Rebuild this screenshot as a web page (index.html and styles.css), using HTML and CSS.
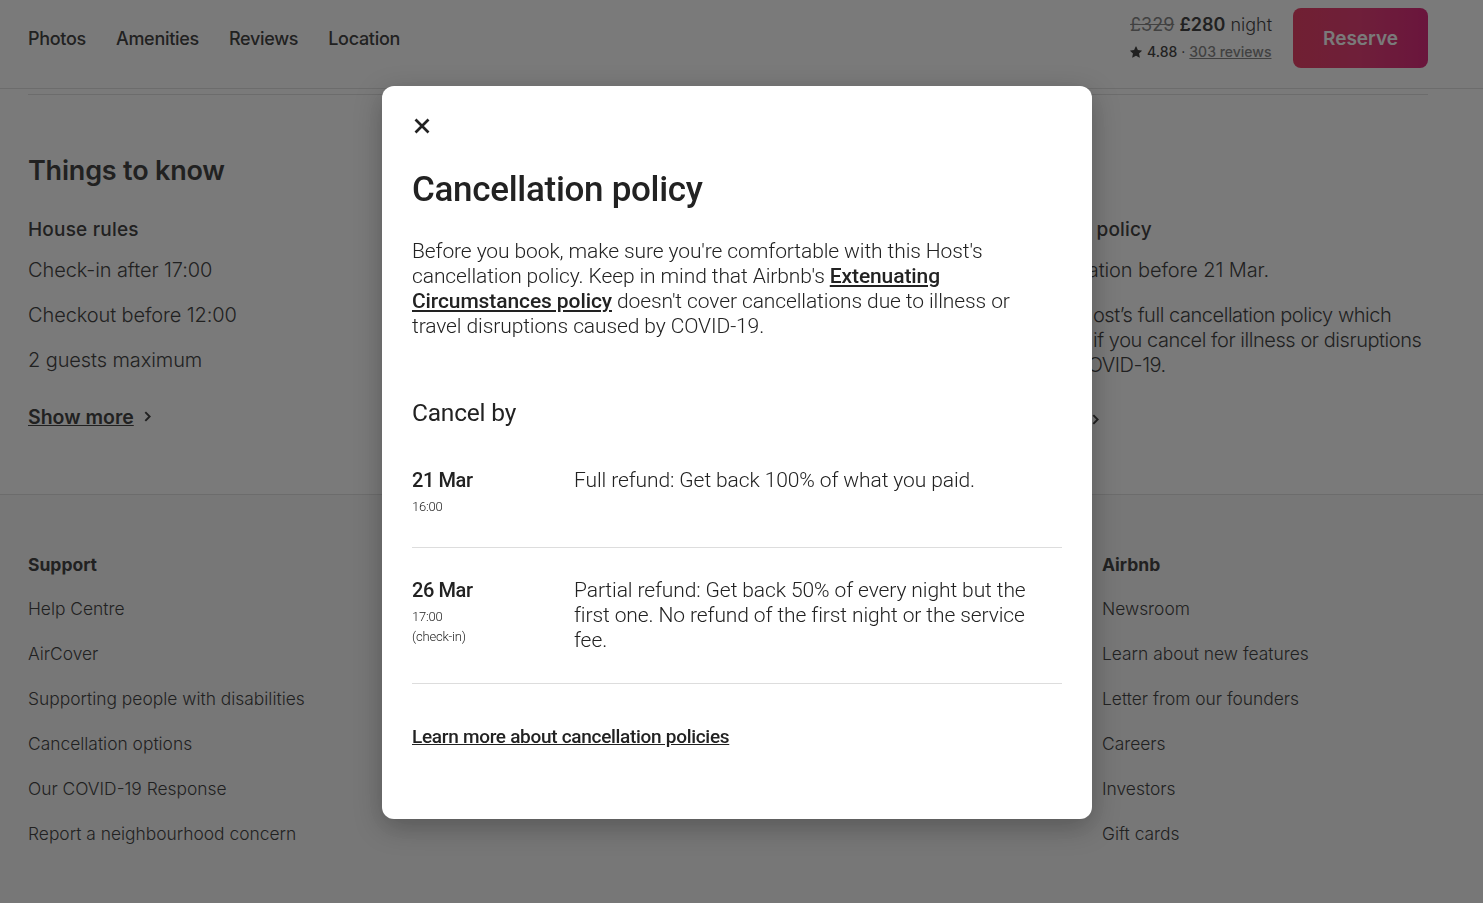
FILE: index.html
```html
<!DOCTYPE html>
<html lang="en">
<head>
<meta charset="utf-8">
<title>Cancellation policy</title>
<link rel="stylesheet" href="styles.css">
</head>
<body>
<div class="page">
  <header class="topbar">
    <nav class="tabs">
      <a class="tab">Photos</a>
      <a class="tab">Amenities</a>
      <a class="tab">Reviews</a>
      <a class="tab">Location</a>
    </nav>
    <div class="booking">
      <div class="price">
        <div class="price-line"><span class="old">£329</span> <span class="now">£280</span> <span class="unit">night</span></div>
        <div class="rating">
          <svg class="star" viewBox="0 0 32 32" width="12" height="12"><path d="M15.1 1.58l-4.13 8.88-9.86 1.27a1 1 0 0 0-.54 1.74l7.3 6.57-1.97 9.85a1 1 0 0 0 1.48 1.06L16 26.05l8.62 4.9a1 1 0 0 0 1.48-1.06l-1.97-9.85 7.3-6.57a1 1 0 0 0-.55-1.73l-9.86-1.28-4.12-8.88a1 1 0 0 0-1.8 0z" fill="currentColor"/></svg>
          <span class="score">4.88</span> · <a class="reviews">303 reviews</a>
        </div>
      </div>
      <button class="reserve">Reserve</button>
    </div>
  </header>

  <main class="container">
    <section class="know">
      <h2 class="know-title">Things to know</h2>
      <div class="know-grid">
        <div class="know-col">
          <h3 class="col-title">House rules</h3>
          <ul class="know-list">
            <li>Check-in after 17:00</li>
            <li>Checkout before 12:00</li>
            <li>2 guests maximum</li>
          </ul>
          <div class="more"><a class="show-more">Show more</a><svg class="chev" viewBox="0 0 12 20" width="7" height="11"><path d="M2 2l8 8-8 8" fill="none" stroke="currentColor" stroke-width="3.6"/></svg></div>
        </div>
        <div class="know-col" aria-hidden="true"></div>
        <div class="know-col">
          <h3 class="col-title">Cancellation policy</h3>
          <ul class="know-list">
            <li>Free cancellation before 21 Mar.</li>
            <li class="para">Review the Host’s full cancellation policy which applies even if you cancel for illness or disruptions caused by COVID-19.</li>
          </ul>
          <div class="more more-low"><a class="show-more">Show more</a><svg class="chev" viewBox="0 0 12 20" width="7" height="11"><path d="M2 2l8 8-8 8" fill="none" stroke="currentColor" stroke-width="3.6"/></svg></div>
        </div>
      </div>
    </section>
  </main>

  <footer class="footer">
    <div class="footer-grid">
      <div class="f-col">
        <h4 class="f-title">Support</h4>
        <ul class="f-list">
          <li>Help Centre</li>
          <li>AirCover</li>
          <li>Supporting people with disabilities</li>
          <li>Cancellation options</li>
          <li>Our COVID-19 Response</li>
          <li>Report a neighbourhood concern</li>
        </ul>
      </div>
      <div class="f-col" aria-hidden="true"></div>
      <div class="f-col" aria-hidden="true"></div>
      <div class="f-col">
        <h4 class="f-title">Airbnb</h4>
        <ul class="f-list">
          <li>Newsroom</li>
          <li>Learn about new features</li>
          <li>Letter from our founders</li>
          <li>Careers</li>
          <li>Investors</li>
          <li>Gift cards</li>
        </ul>
      </div>
    </div>
  </footer>
</div>

<div class="overlay">
  <div class="modal" role="dialog" aria-label="Cancellation policy">
    <button class="close" aria-label="Close">
      <svg viewBox="0 0 32 32" width="16" height="16"><path d="M3 3l26 26M29 3L3 29" fill="none" stroke="currentColor" stroke-width="5.4"/></svg>
    </button>
    <h1 class="m-title">Cancellation policy</h1>
    <p class="m-text">Before you book, make sure you're comfortable with this Host's cancellation policy. Keep in mind that Airbnb's <a class="m-link">Extenuating Circumstances policy</a> doesn't cover cancellations due to illness or travel disruptions caused by COVID-19.</p>
    <h2 class="m-sub">Cancel by</h2>
    <div class="rows">
      <div class="row">
        <div class="when">
          <div class="date">21 Mar</div>
          <div class="time">16:00</div>
        </div>
        <div class="what">Full refund: Get back 100% of what you paid.</div>
      </div>
      <div class="row">
        <div class="when">
          <div class="date">26 Mar</div>
          <div class="time">17:00<br>(check-in)</div>
        </div>
        <div class="what">Partial refund: Get back 50% of every night but the first one. No refund of the first night or the service fee.</div>
      </div>
    </div>
    <a class="m-learn">Learn more about cancellation policies</a>
  </div>
</div>
</body>
</html>
```

FILE: styles.css
```css
* { box-sizing: border-box; }

html, body {
  margin: 0;
  padding: 0;
}

body {
  width: 1483px;
  height: 903px;
  overflow: hidden;
  background: #fff;
  color: #222;
  font-family: Inter, "Noto Sans", "Liberation Sans", sans-serif;
}

ul { list-style: none; margin: 0; padding: 0; }
h1, h2, h3, h4, p { margin: 0; }

.page {
  width: 1483px;
}

/* ---------- top bar ---------- */
.topbar {
  height: 89px;
  border-bottom: 1px solid #ddd;
  display: flex;
  align-items: flex-start;
  justify-content: space-between;
  padding: 0 55px 0 28px;
}

.tabs {
  display: flex;
  gap: 30px;
  height: 77px;
  align-items: center;
}

.tab {
  font-size: 18px;
  font-weight: 500;
  color: #222;
  letter-spacing: -0.3px;
}

.booking {
  display: flex;
  align-items: flex-start;
  gap: 21px;
  padding-top: 8px;
}

.price {
  padding-top: 5px;
}

.price-line {
  font-size: 18px;
  line-height: 24px;
  white-space: nowrap;
}

.old {
  color: #717171;
  text-decoration: line-through;
  font-weight: 400;
}

.now {
  font-weight: 600;
}

.unit {
  font-weight: 300;
}

.rating {
  font-size: 14px;
  line-height: 18px;
  margin-top: 6px;
  display: flex;
  align-items: center;
  gap: 4px;
  white-space: nowrap;
}

.star { color: #222; margin-right: 1px; }

.score { font-weight: 500; }

.reviews {
  color: #717171;
  text-decoration: underline;
  font-weight: 500;
}

.reserve {
  width: 135px;
  height: 60px;
  border: 0;
  border-radius: 8px;
  background: linear-gradient(to right, #e61e4d 0%, #e31c5f 50%, #d70466 100%);
  color: #fff;
  font-family: inherit;
  font-size: 19px;
  font-weight: 600;
}

/* ---------- things to know ---------- */
.container {
  width: 1400px;
  margin-left: 28px;
  border-top: 1px solid #ddd;
  margin-top: 5px;
}

.know {
  padding: 61px 0 62px;
}

.know-title {
  font-size: 27px;
  line-height: 30px;
  font-weight: 600;
  letter-spacing: -0.2px;
}

.know-grid {
  display: grid;
  grid-template-columns: repeat(3, 1fr);
  gap: 22px;
  margin-top: 32px;
}

.col-title {
  font-size: 19px;
  line-height: 24px;
  font-weight: 500;
  letter-spacing: 0.2px;
}

.know-list {
  margin-top: 16px;
}

.know-list li {
  font-size: 20px;
  line-height: 25px;
  font-weight: 300;
  letter-spacing: -0.1px;
}

.know-list li.para {
  letter-spacing: -0.45px;
}

.know-list li + li {
  margin-top: 20px;
}

.more {
  margin-top: 32px;
  display: flex;
  align-items: center;
  height: 24px;
}

.more-low { margin-top: 30px; }

.show-more {
  font-size: 19.5px;
  line-height: 24px;
  font-weight: 600;
  text-decoration: underline;
}

.chev {
  margin-left: 10px;
  margin-top: -1px;
}

/* ---------- footer ---------- */
.footer {
  border-top: 1px solid #ddd;
  background: #f7f7f7;
  padding: 60px 0 80px;
}

.footer-grid {
  width: 1400px;
  margin-left: 28px;
  display: grid;
  grid-template-columns: repeat(4, 1fr);
  gap: 32px;
}

.f-title {
  font-size: 17.5px;
  line-height: 20px;
  font-weight: 700;
}

.f-list {
  margin-top: 24px;
}

.f-list li {
  font-size: 17.4px;
  line-height: 20px;
  font-weight: 300;
}

.f-list li + li {
  margin-top: 25px;
}

/* ---------- modal ---------- */
.overlay {
  position: fixed;
  inset: 0;
  background: rgba(34, 34, 34, 0.6);
  display: flex;
  justify-content: center;
  align-items: flex-start;
  padding: 86px 9px 0 0;
}

.modal {
  width: 710px;
  height: 733px;
  background: #fff;
  border-radius: 12px;
  box-shadow: 0 8px 28px rgba(0, 0, 0, 0.28);
  padding: 24px 30px 0;
  font-family: Roboto, "Liberation Sans", sans-serif;
  color: #222;
}

.close {
  display: flex;
  align-items: center;
  justify-content: center;
  width: 32px;
  height: 32px;
  margin-left: -6px;
  border: 0;
  padding: 0;
  background: transparent;
  color: #222;
}

.m-title {
  margin-top: 28px;
  font-size: 35px;
  line-height: 40px;
  font-weight: 500;
  letter-spacing: -0.3px;
}

.m-text {
  margin-top: 29px;
  font-size: 21px;
  line-height: 25px;
  font-weight: 300;
  letter-spacing: -0.1px;
}

.m-link {
  font-weight: 500;
  text-decoration: underline;
}

.m-sub {
  margin-top: 61px;
  font-size: 24.5px;
  line-height: 26px;
  font-weight: 400;
  letter-spacing: -0.2px;
}

.rows {
  margin-top: 12px;
}

.row {
  display: flex;
  padding: 30px 0;
  border-bottom: 1px solid #ddd;
}

.when {
  width: 162px;
  flex: none;
}

.date {
  font-size: 20px;
  line-height: 24px;
  font-weight: 500;
  letter-spacing: -0.4px;
}

.time {
  margin-top: 5px;
  font-size: 13px;
  line-height: 20px;
  font-weight: 300;
  letter-spacing: -0.2px;
}

.what {
  flex: 1;
  font-size: 21px;
  line-height: 25px;
  font-weight: 300;
  letter-spacing: -0.1px;
}

.m-learn {
  display: inline-block;
  margin-top: 43px;
  font-size: 19px;
  line-height: 20px;
  font-weight: 500;
  text-decoration: underline;
  letter-spacing: -0.3px;
}
```
